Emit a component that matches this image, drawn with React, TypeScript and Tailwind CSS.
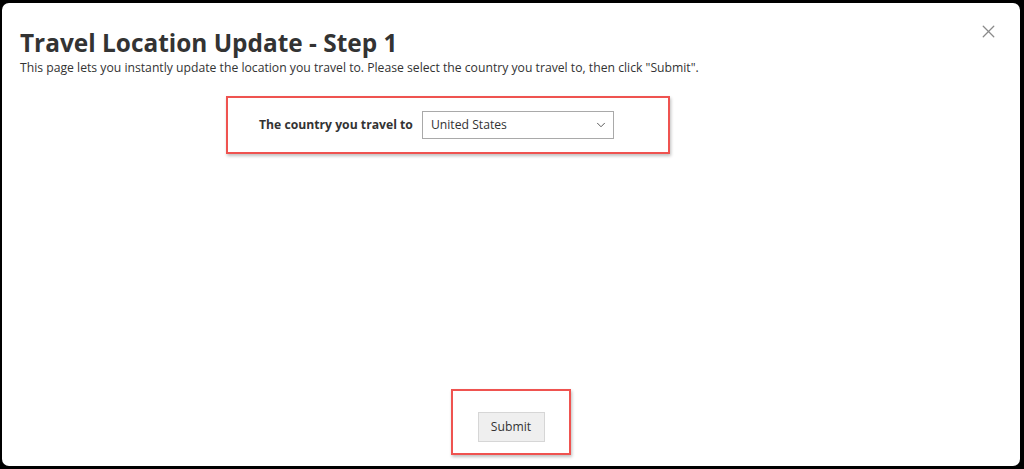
import { ChevronDown, X } from 'lucide-react';

export default function App() {
  return (
    <div
      className="h-[469px] w-[1024px] bg-black pt-[3px] pb-[3px] pl-[2px] pr-[4px]"
      style={{ fontFamily: '"Open Sans", "Noto Sans", sans-serif' }}
    >
      <div className="relative flex h-full flex-col rounded-[7px] bg-white px-[18px]">
        {/* close */}
        <button className="absolute right-[21px] top-[18px] text-[#8a8a8a]">
          <X size={21} strokeWidth={1.5} />
        </button>

        <h1 className="mt-[25px] text-[24.4px] font-bold leading-[30px] text-[#333]">
          Travel Location Update - Step 1
        </h1>
        <p className="mt-[1px] text-[12.2px] leading-[17px] text-[#333]">
          This page lets you instantly update the location you travel to. Please select the country you
          travel to, then click "Submit".
        </p>

        {/* country row */}
        <div className="ml-[206px] mt-[20px] flex h-[58px] w-[444px] items-center border-2 border-[#ef5350] pl-[31px] shadow-[1px_2px_3px_rgba(0,0,0,0.25)]">
          <span className="text-[12.2px] font-bold text-[#333]">The country you travel to</span>
          <div className="ml-[9px] flex h-[28px] w-[192px] items-center justify-between border border-[#a9a9a9] pl-[8px] pr-[5px] text-[12.2px] text-[#333]">
            <span>United States</span>
            <ChevronDown size={14} strokeWidth={1.5} className="text-[#444]" />
          </div>
        </div>

        <div className="flex-1" />

        {/* submit */}
        <div className="mb-[11px] flex h-[66px] w-[120px] self-center justify-center border-2 border-[#ef5350] pt-[21px] shadow-[1px_2px_3px_rgba(0,0,0,0.25)]">
          <button className="h-[30px] w-[67px] border border-[#d6d6d6] bg-[#efefef] text-[12.2px] text-[#333]">
            Submit
          </button>
        </div>
      </div>
    </div>
  );
}
